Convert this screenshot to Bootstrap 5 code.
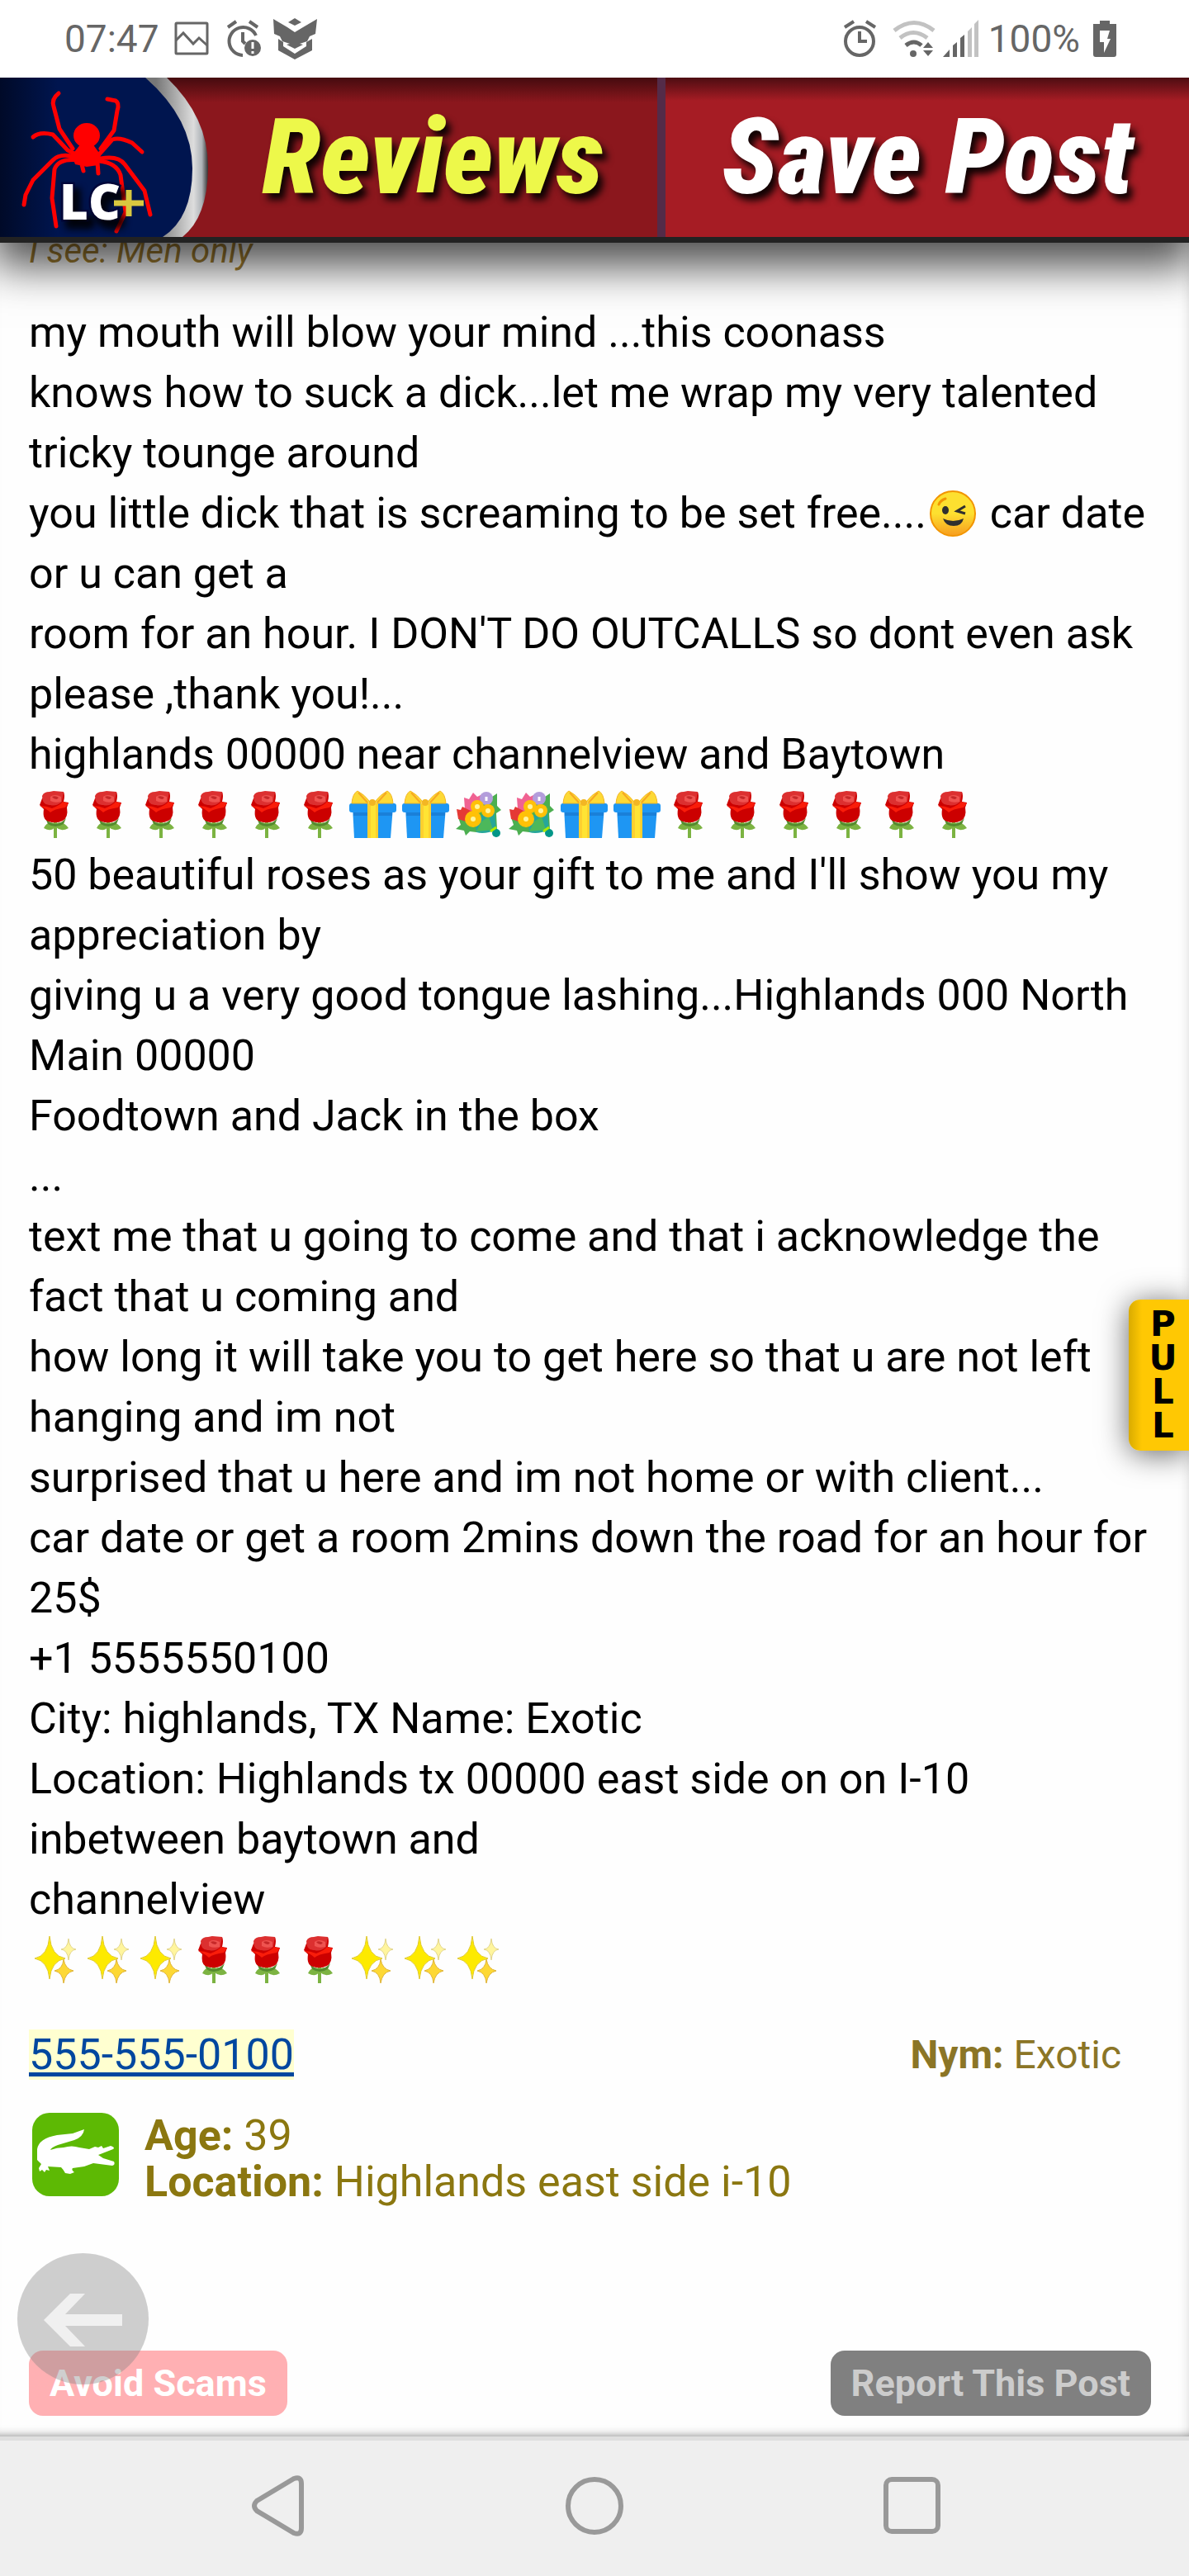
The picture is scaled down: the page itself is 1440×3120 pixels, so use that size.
<!DOCTYPE html>
<html lang="en">
<head>
    <meta charset="UTF-8">
    <meta name="viewport" content="width=device-width, initial-scale=1.0">
    <title>Post</title>
    <link href="https://cdn.jsdelivr.net/npm/bootstrap@5.3.0/dist/css/bootstrap.min.css" rel="stylesheet">
    <style>
        body {
            font-family: Roboto, "Liberation Sans", sans-serif;
            font-size: 52px;
            line-height: 73px;
            color: #000;
            background: #fefefe;
        }
        .status-bar {
            height: 94px;
            padding: 0 88px 0 78px;
            font-size: 46px;
            line-height: 94px;
            color: #666;
            background: #fff;
            z-index: 3;
        }
        .status-bar svg {
            flex: none;
        }
        .status-bar .clock {
            margin-right: 8px;
        }
        .site-header {
            height: 200px;
            z-index: 2;
            border-bottom: 7px solid #222;
            box-shadow: 0 20px 50px 8px rgba(0,0,0,0.7);
        }
        .site-header a {
            font-family: "Liberation Sans Narrow", "Roboto Condensed", "Open Sans", sans-serif;
            font-size: 128px;
            font-weight: 900;
            font-style: italic;
            line-height: 193px;
            white-space: nowrap;
            text-shadow: 6px 8px 8px rgba(0,0,0,0.9);
        }
        .reviews-link {
            width: 56%;
            gap: 58px;
            color: #edf84a;
            background: linear-gradient(#450b0f, #8b171d 30px);
            border-right: 10px solid #542b48;
        }
        .save-link {
            color: #fff;
            background: linear-gradient(#4d0d12, #a61c24 28px);
        }
        .post-page {
            padding: 0 46px 0 35px;
            box-shadow: inset -12px 0 14px -12px rgba(0,0,0,0.15), inset 0 -12px 12px -12px rgba(0,0,0,0.5);
        }
        .i-see {
            margin: -15px 0 38px;
            font-size: 42px;
            line-height: 49px;
            color: #a68232;
        }
        .post-text {
            margin: 0 -11px 42px 0;
        }
        .emoji {
            width: 64px;
            height: 64px;
            vertical-align: -13px;
        }
        .phone-link {
            color: #00479f;
            background: #ffffd0;
            text-decoration-thickness: 5px;
            text-underline-offset: 4px;
        }
        .nym {
            padding-right: 36px;
            font-size: 48px;
            color: #8b7526;
        }
        .about {
            margin-top: 34px;
            gap: 31px;
            padding-left: 4px;
            line-height: 56px;
            color: #8b7710;
        }
        .post-actions {
            padding-bottom: 25px;
        }
        .post-actions .btn {
            padding: 0 25px;
            border: 0;
            border-radius: 17px;
            font-size: 45px;
            line-height: 79px;
            font-weight: 700;
        }
        .btn-scams {
            color: #fff;
            background: #ffb0b3;
        }
        .btn-report {
            color: #ccc;
            background: #808080;
        }
        .back-btn {
            left: 21px;
            bottom: 63px;
            width: 159px;
            height: 159px;
            background: rgba(132,132,132,0.39);
        }
        .pull-tab {
            right: 0;
            top: 1280px;
            width: 73px;
            padding: 9px 0 10px 10px;
            border-radius: 14px 0 0 14px;
            font-family: "DejaVu Sans", sans-serif;
            font-size: 42px;
            font-weight: 700;
            line-height: 41px;
            background: linear-gradient(90deg, #d9ab00, #ffc803 16px);
            box-shadow: 0 4px 36px rgba(0,0,0,0.6);
        }
        .phone-nav {
            height: 169px;
            padding: 0 232px 6px;
            border-top: 5px solid #dfdfdf;
            background: #efefef;
        }
    </style>
</head>
<body class="d-flex flex-column min-vh-100">
    <!-- emoji drawings -->
    <svg class="position-absolute" width="0" height="0">
        <symbol id="rose" viewBox="0 0 64 64">
            <path d="M32 42v20" stroke="#7cb342" stroke-width="4"/>
            <path d="M31 44q-9-3-13 6q9 5 13-1zM33 44q9-3 15 6q-9 5-15-1z" fill="#7cb342"/>
            <path d="M20 38q12 14 25 0l-3 7q-10 6-19 0z" fill="#558b2f"/>
            <path d="M16 14l-3 8 5 5q-2 13 6 15 9 3 17-1 7-4 5-16l2-6-6-1q2-8 0-12z" fill="#cc0000"/>
            <path d="M13 23q8 0 15 3 10-4 13-8l7 2-4 5q-14 2-18 6-4-4-13-8z" fill="#f91c0a"/>
            <path d="M16 11q2-5 9-5l5-1 12 1-2 12q-7 6-14 4-10 1-10-11z" fill="#dc3030"/>
            <path d="M26 12q5-4 13 0v6q-8 2-13-1z" fill="#ef5350"/>
            <path d="M28 12q4-2 8 1l-2 2q-4 0-6-3z" fill="#c62828"/>
        </symbol>
        <symbol id="gift" viewBox="0 0 64 64">
            <path d="M8 24h49l-3 38H10z" fill="#1e96f3"/>
            <rect x="4" y="20" width="57" height="11" rx="3" fill="#1e96f3"/>
            <path d="M9 31h47v4H9z" fill="#1a80d8"/>
            <path d="M26 20h13v42H26z" fill="#fdd02f"/>
            <path d="M30 20h6v42h-6z" fill="#ffe434"/>
            <path d="M7 20q1-12 7-15 8 4 15 13l-3 2zM57 20q-1-12-7-15-8 4-15 13l3 2z" fill="#fdd935" stroke="#f3b623" stroke-width="1"/>
            <path d="M15 7l11 12M49 7L38 19" stroke="#f6a821" stroke-width="2"/>
            <circle cx="32" cy="19" r="4" fill="#f3b623"/>
        </symbol>
        <symbol id="bouquet" viewBox="0 0 64 64">
            <path d="M46 14l9-6v15l5 5-6 4 1 20-25 3-8-1-5 5-2-6-10-2 6-5-3-9 15-5z" fill="#4caf50"/>
            <path d="M28 37l24-8 2 23q-14 6-24 3z" fill="#26a69a"/>
            <path d="M36 42l9-6 5 16-20 2z" fill="#4cb85b"/>
            <circle cx="54" cy="56" r="5" fill="#009688"/>
            <path d="M47 54l7-5" stroke="#aeea00" stroke-width="3"/>
            <path d="M15 13l6 2 5-8 5 5 6-3v16l-10 6-11-4z" fill="#f06292"/>
            <path d="M6 27l5 1 2-4 12 6-8 12-9-3z" fill="#e53935"/>
            <circle cx="42" cy="14" r="8" fill="#b39ddb"/>
            <path d="M42 12v5" stroke="#fff" stroke-width="3"/>
            <g fill="#ffc107">
                <circle cx="31" cy="24" r="8"/>
                <circle cx="44" cy="29" r="8"/>
                <circle cx="26" cy="39" r="10"/>
            </g>
            <g fill="#fff59d">
                <circle cx="31" cy="24" r="3"/>
                <circle cx="44" cy="29" r="3"/>
                <circle cx="26" cy="39" r="3"/>
            </g>
        </symbol>
        <symbol id="sparkles" viewBox="0 0 64 64">
            <path d="M25 5q2 24 19 27-17 3-19 25-2-22-18-25 16-3 18-27z" fill="#fdea00" stroke="#e0c92c"/>
            <path d="M48 8q1 12 9 13-8 1-9 13-1-12-9-13 8-1 9-13z" fill="#fff59d" stroke="#e2d58c"/>
            <path d="M42 33q2 12 12 14-10 2-12 15-1-13-11-15 10-2 11-14z" fill="#fdd835" stroke="#e0b53a"/>
        </symbol>
        <linearGradient id="winkFill" x2="0" y2="1">
            <stop offset="0.5" stop-color="#fde030"/>
            <stop offset="1" stop-color="#f79c1f"/>
        </linearGradient>
        <symbol id="wink" viewBox="0 0 64 64">
            <circle cx="32" cy="34" r="27" fill="url(#winkFill)" stroke="#f29500" stroke-width="2"/>
            <ellipse cx="23" cy="30" rx="4" ry="5" fill="#2f2f2f"/>
            <path d="M47 25l-10 6 10 3" fill="none" stroke="#2f2f2f" stroke-width="3"/>
            <path d="M20 40q12 6 25 0-2 9-12 9T20 40z" fill="#2f2f2f"/>
            <path d="M15 23q2-5 8-7" fill="none" stroke="#f29500" stroke-width="3" stroke-linecap="round"/>
        </symbol>
    </svg>

    <div class="status-bar position-relative d-flex justify-content-between">
        <div class="d-flex align-items-center">
            <span class="clock">07:47</span>
            <svg width="62" height="60" viewBox="201 16 62 60" fill="none" stroke="#666" stroke-width="3">
                <rect x="213" y="27" width="38" height="37" rx="1"/>
                <path d="M213 48l9-9 12 13 7-7 10 9"/>
            </svg>
            <svg width="62" height="60" viewBox="263 16 62 60" fill="none" stroke="#666" stroke-width="4">
                <path d="M310 42a17 17 0 1 0-16 24"/>
                <path d="M294 38v11l3 3M276 32l10-7M312 32l-10-7"/>
                <circle cx="306" cy="57" r="10" fill="#666" stroke="none"/>
                <path d="M306 50v8M306 61v3" stroke="#fff" stroke-width="3"/>
            </svg>
            <svg width="62" height="60" viewBox="325 16 62 60" fill="#666">
                <path d="M331 22l17 10 9 6 10-6 17-10-2 18-7 3-3 6-9 3 4 1-10 5-10-5 4-1-9-3-3-6-7-3z"/>
                <path d="M357 21l8 5-8 4-8-4z"/>
                <path d="M337 46l6 4v5l14 9 14-9v-5l7-4v14l-21 11-20-11z"/>
            </svg>
        </div>
        <div class="d-flex align-items-center">
            <svg width="60" height="60" viewBox="1010 16 60 60" fill="none" stroke="#666" stroke-width="4">
                <circle cx="1039" cy="49" r="17"/>
                <path d="M1039 37v12h9M1021 32l11-7M1058 32l-11-7"/>
            </svg>
            <svg width="65" height="60" viewBox="1070 16 65 60" fill="none" stroke="#666" stroke-width="5">
                <path d="M1081 36q24-19 48 0M1088 45q16-13 33 0" stroke="#c2c2c2"/>
                <path d="M1095 54q10-8 19 0"/>
                <circle cx="1104" cy="64" r="4" fill="#666" stroke="none"/>
                <path d="M1116 57l6-7 6 7zM1116 60h12l-6 7z" fill="#666" stroke="none"/>
            </svg>
            <svg width="60" height="60" viewBox="1135 16 60 60" fill="#666">
                <path d="M1140 68l8-9v9zM1152 54l5-4v18h-5zM1161 45l5-4v27h-5z"/>
                <path d="M1170 37l5-5v36h-5zM1178 28l5-5v45h-5z" fill="#c2c2c2"/>
            </svg>
            <span class="me-3">100%</span>
            <svg width="28" height="60" viewBox="1324 16 28 60">
                <path d="M1332 24h12v4h8v37q0 3-3 3h-22q-3 0-3-3V28h8z" fill="#666"/>
                <path d="M1332 36h12l-3 10h4l-8 17v-13h-5z" fill="#fff"/>
            </svg>
        </div>
    </div>

    <header class="site-header d-flex position-relative">
        <a href="#" class="reviews-link d-flex text-decoration-none">
            <!-- spider logo -->
            <svg width="260" height="193" viewBox="0 94 260 193">
                <defs>
                    <linearGradient id="ring">
                        <stop offset="0.75" stop-color="#777"/>
                        <stop offset="0.93" stop-color="#ddd"/>
                        <stop offset="0.97" stop-color="#aeb3b8"/>
                        <stop offset="1" stop-color="#333"/>
                    </linearGradient>
                    <linearGradient id="navy">
                        <stop offset="0" stop-color="#000a28"/>
                        <stop offset="0.3" stop-color="#00154f"/>
                    </linearGradient>
                </defs>
                <path d="M0 94h202q50 48 50 108t-31 85H0z" fill="url(#ring)"/>
                <path d="M0 94h176q57 50 57 110t-36 83H0z" fill="url(#navy)"/>
                <g fill="none" stroke="#f00" stroke-width="5" stroke-linecap="round" stroke-linejoin="round">
                    <path d="M71 113q-9 7-6 16l7 27 16 24M130 120l10 2q5 3 2 12l-4 24-16 22"/>
                    <path d="M40 166q8-7 24-3l18 19 14 7M120 187l16-18q9-3 24 4l12 11"/>
                    <path d="M92 190q-20-5-28 4l-24 24-9 18-2 12M96 194q-25-3-30 11l-3 35 5 34"/>
                    <path d="M122 192q21-4 29 7l24 32 7 29M120 195q21 2 26 17l6 45-11 23"/>
                    <path d="M98 195l3 12M118 196l1 14"/>
                </g>
                <ellipse cx="105" cy="164" rx="16" ry="15" fill="#f00"/>
                <path d="M98 174h14l10 14-3 12-14 2-14-3-4-11z" fill="#f00"/>
                <text x="72" y="266" font-family="Open Sans, sans-serif" font-size="60" font-weight="800" font-style="normal" fill="#fff" stroke="#00073a" stroke-width="5" paint-order="stroke">LC</text>
                <path d="M138 246h36M156 230v32" stroke="#d9c83f" stroke-width="7"/>
            </svg>
            <span>Reviews</span>
        </a>
        <a href="#" class="save-link flex-grow-1 text-center text-decoration-none">Save Post</a>
    </header>

    <main class="post-page position-relative flex-grow-1 d-flex flex-column">
        <p class="i-see fst-italic">I see: Men only</p>
        <p class="post-text">
            my mouth will blow your mind ...this coonass<br>
            knows how to suck a dick...let me wrap my very talented tricky tounge around<br>
            you little dick that is screaming to be set free....<svg class="emoji"><use href="#wink"/></svg> car date or u can get a<br>
            room for an hour. I DON'T DO OUTCALLS so dont even ask please ,thank you!...<br>
            highlands 00000 near channelview and Baytown<br>
            <svg class="emoji"><use href="#rose"/></svg><svg class="emoji"><use href="#rose"/></svg><svg class="emoji"><use href="#rose"/></svg><svg class="emoji"><use href="#rose"/></svg><svg class="emoji"><use href="#rose"/></svg><svg class="emoji"><use href="#rose"/></svg><svg class="emoji"><use href="#gift"/></svg><svg class="emoji"><use href="#gift"/></svg><svg class="emoji"><use href="#bouquet"/></svg><svg class="emoji"><use href="#bouquet"/></svg><svg class="emoji"><use href="#gift"/></svg><svg class="emoji"><use href="#gift"/></svg><svg class="emoji"><use href="#rose"/></svg><svg class="emoji"><use href="#rose"/></svg><svg class="emoji"><use href="#rose"/></svg><svg class="emoji"><use href="#rose"/></svg><svg class="emoji"><use href="#rose"/></svg><svg class="emoji"><use href="#rose"/></svg><br>
            50 beautiful roses as your gift to me and I'll show you my appreciation by<br>
            giving u a very good tongue lashing...Highlands 000 North Main 00000<br>
            Foodtown and Jack in the box<br>
            ...<br>
            text me that u going to come and that i acknowledge the fact that u coming and<br>
            how long it will take you to get here so that u are not left hanging and im not<br>
            surprised that u here and im not home or with client...<br>
            car date or get a room 2mins down the road for an hour for 25$<br>
            +1 5555550100<br>
            City: highlands, TX Name: Exotic<br>
            Location: Highlands tx 00000 east side on on I-10 inbetween baytown and<br>
            channelview<br>
            <svg class="emoji"><use href="#sparkles"/></svg><svg class="emoji"><use href="#sparkles"/></svg><svg class="emoji"><use href="#sparkles"/></svg><svg class="emoji"><use href="#rose"/></svg><svg class="emoji"><use href="#rose"/></svg><svg class="emoji"><use href="#rose"/></svg><svg class="emoji"><use href="#sparkles"/></svg><svg class="emoji"><use href="#sparkles"/></svg><svg class="emoji"><use href="#sparkles"/></svg>
        </p>

        <div class="d-flex justify-content-between">
            <div><a href="#" class="phone-link">555-555-0100</a></div>
            <div class="nym"><b>Nym:</b> Exotic</div>
        </div>
        <div class="about d-flex align-items-start">
            <svg width="105" height="101" viewBox="0 0 105 101">
                <rect width="105" height="101" rx="21" fill="#5db904"/>
                <path d="M63 20q-1 9-12 13l-20 6q-8 3-9 6 8-3 16-3 10-3 19 0l12 2 7-3 4 1 4-2 2 3 9-3q6 2 3 4l-18 7 6 4 13 4q2 4-2 5l-23-3-11 4-14 2q-2 2 2 5l-5 2-6-1q-2-4-5-7l-16-1 2 5-4-1-2 3-3-3-3 2-1-4 3-5-5-5V44q2-13 24-17l19-2z" fill="#fff"/>
            </svg>
            <div>
                <div><b>Age:</b> 39</div>
                <div><b>Location:</b> Highlands east side i-10</div>
            </div>
        </div>

        <div class="post-actions d-flex justify-content-between mt-auto">
            <button type="button" class="btn btn-scams">Avoid Scams</button>
            <button type="button" class="btn btn-report">Report This Post</button>
        </div>

        <button type="button" class="back-btn position-absolute rounded-circle border-0 p-0 d-flex" aria-label="Back">
            <svg width="159" height="159" viewBox="0 0 159 159">
                <path d="M32 81L64 49h18L58 74h69v14H58l24 25H64z" fill="#fff" fill-opacity="0.7"/>
            </svg>
        </button>
        <button type="button" class="pull-tab position-absolute border-0 text-black text-center">P<br>U<br>L<br>L</button>
    </main>

    <nav class="phone-nav d-flex align-items-center justify-content-between">
        <a href="#" aria-label="Back">
            <svg class="d-block" width="210" height="76" viewBox="0 0 210 76" fill="none" stroke="#999" stroke-width="6">
                <path d="M79 32L124 5q9-3 9 6v54q0 9-9 6L79 44q-6-6 0-12z"/>
            </svg>
        </a>
        <a href="#" aria-label="Home">
            <svg class="d-block" width="76" height="76" viewBox="0 0 76 76" fill="none" stroke="#999" stroke-width="6">
                <circle cx="38" cy="38" r="32"/>
            </svg>
        </a>
        <a href="#" aria-label="Recent">
            <svg class="d-block" width="210" height="76" viewBox="0 0 210 76" fill="none" stroke="#999" stroke-width="6">
                <rect x="75" y="6" width="63" height="63" rx="7"/>
            </svg>
        </a>
    </nav>

    <script src="https://cdn.jsdelivr.net/npm/bootstrap@5.3.0/dist/js/bootstrap.bundle.min.js"></script>
</body>
</html>
